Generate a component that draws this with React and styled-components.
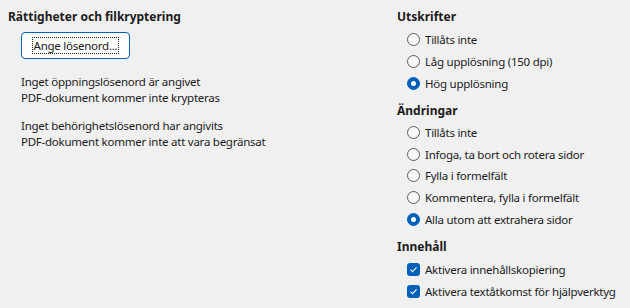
import React from "react";
import styled, { createGlobalStyle } from "styled-components";

const GlobalStyle = createGlobalStyle`
  html, body {
    margin: 0;
    padding: 0;
    background: #f0f0f0;
  }
  body {
    font-family: "Noto Sans", "Open Sans", sans-serif;
    font-size: 11.5px;
    letter-spacing: -0.25px;
    color: #1b1b1b;
  }
`;

const Page = styled.div`
  width: 630px;
  height: 308px;
  box-sizing: border-box;
  padding: 9px 0 0 8px;
  display: grid;
  grid-template-columns: 389px 1fr;
  white-space: nowrap;
`;

const Column = styled.div`
  display: flex;
  flex-direction: column;
`;

const Heading = styled.div`
  font-weight: 700;
  font-size: 12px;
  letter-spacing: 0;
  line-height: 16px;
  height: 16px;
  margin-top: ${(p) => p.$top || 0}px;
`;

const Button = styled.button`
  align-self: flex-start;
  margin: 7px 0 0 13px;
  width: 109px;
  height: 27px;
  border: 1px solid #005fb8;
  border-radius: 4px;
  background: #fdfdfd;
  font: inherit;
  letter-spacing: inherit;
  color: inherit;
  padding: 0;
  display: flex;
  align-items: center;
  justify-content: center;
`;

const FocusText = styled.span`
  outline: 1px dotted #222;
  padding: 0 1px;
  line-height: 15px;
`;

const Info = styled.p`
  margin: ${(p) => p.$top}px 0 0 13px;
  line-height: 15.5px;
`;

const List = styled.div`
  display: flex;
  flex-direction: column;
  margin: ${(p) => p.$top || 3}px 0 0 10px;
`;

const Row = styled.label`
  display: flex;
  align-items: center;
  gap: 5px;
  height: ${(p) => p.$h || 22}px;
`;

const Radio = styled.span`
  width: 13px;
  height: 13px;
  box-sizing: border-box;
  border-radius: 50%;
  flex: none;
  display: flex;
  align-items: center;
  justify-content: center;
  border: 1px solid ${(p) => (p.$on ? "#005fb8" : "#5c5c5c")};
  background: ${(p) => (p.$on ? "#005fb8" : "#f7f7f7")};
  &::after {
    content: "";
    display: ${(p) => (p.$on ? "block" : "none")};
    width: 5px;
    height: 5px;
    border-radius: 50%;
    background: #fff;
  }
`;

const Check = styled.span`
  width: 13px;
  height: 13px;
  border-radius: 3px;
  background: #005fb8;
  flex: none;
  display: flex;
  align-items: center;
  justify-content: center;
`;

function RadioRow({ on, h, children }) {
  return (
    <Row $h={h}>
      <Radio $on={on} />
      {children}
    </Row>
  );
}

function CheckRow({ children }) {
  return (
    <Row>
      <Check>
        <svg width="9" height="9" viewBox="0 0 9 9">
          <path d="M1.5 4.7 L3.5 6.7 L7.6 2.4" fill="none" stroke="#fff" strokeWidth="1.1" />
        </svg>
      </Check>
      {children}
    </Row>
  );
}

export default function App() {
  return (
    <>
      <GlobalStyle />
      <Page>
        <Column>
          <Heading>Rättigheter och filkryptering</Heading>
          <Button>
            <FocusText>Ange lösenord...</FocusText>
          </Button>
          <Info $top={15}>
            Inget öppningslösenord är angivet
            <br />
            PDF-dokument kommer inte krypteras
          </Info>
          <Info $top={13}>
            Inget behörighetslösenord har angivits
            <br />
            PDF-dokument kommer inte att vara begränsat
          </Info>
        </Column>
        <Column>
          <Heading>Utskrifter</Heading>
          <List>
            <RadioRow>Tillåts inte</RadioRow>
            <RadioRow>Låg upplösning (150 dpi)</RadioRow>
            <RadioRow on>Hög upplösning</RadioRow>
          </List>
          <Heading $top={9}>Ändringar</Heading>
          <List>
            <RadioRow h={21.6}>Tillåts inte</RadioRow>
            <RadioRow h={21.6}>Infoga, ta bort och rotera sidor</RadioRow>
            <RadioRow h={21.6}>Fylla i formelfält</RadioRow>
            <RadioRow h={21.6}>Kommentera, fylla i formelfält</RadioRow>
            <RadioRow h={21.6} on>Alla utom att extrahera sidor</RadioRow>
          </List>
          <Heading $top={9}>Innehåll</Heading>
          <List $top={4}>
            <CheckRow>Aktivera innehållskopiering</CheckRow>
            <CheckRow>Aktivera textåtkomst för hjälpverktyg</CheckRow>
          </List>
        </Column>
      </Page>
    </>
  );
}
